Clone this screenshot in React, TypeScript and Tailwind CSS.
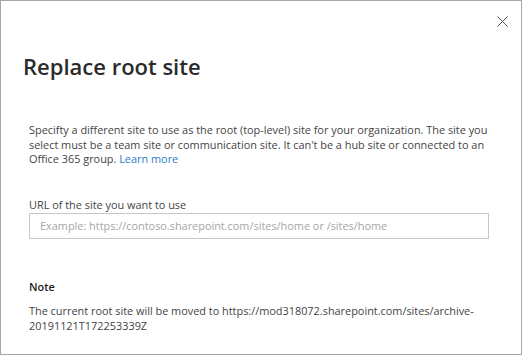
export default function App() {
  return (
    <div
      className="h-[355px] w-[522px] overflow-hidden border border-[#a6a6a6] bg-white text-[#444]"
      style={{ fontFamily: '"Open Sans", "Noto Sans", sans-serif' }}
    >
      {/* Header */}
      <div className="flex justify-end pr-[13px] pt-[14px]">
        <button className="flex h-[12px] w-[12px] items-center justify-center text-[#555]">
          <svg width="11" height="11" viewBox="0 0 11 11" fill="none">
            <path d="M0.5 0.5L10.5 10.5M10.5 0.5L0.5 10.5" stroke="currentColor" strokeWidth="1" />
          </svg>
        </button>
      </div>

      <h1 className="ml-[22px] mt-[25px] text-[22px] font-semibold leading-[28px] text-[#2b2b2b]">
        Replace root site
      </h1>

      <div className="px-[28px] pt-[43px]">
        <p className="w-[464px] text-[10.9px] leading-[14.5px]">
          Specifty a different site to use as the root (top-level) site for your organization. The
          site you select must be a team site or communication site. It can't be a hub site or
          connected to an Office 365 group.{" "}
          <a href="#" className="text-[#2b7bc4]">
            Learn more
          </a>
        </p>

        {/* URL field */}
        <label className="mt-[31px] block text-[10.9px] leading-[14px]">
          URL of the site you want to use
        </label>
        <input
          type="text"
          placeholder="Example: https://contoso.sharepoint.com/sites/home or /sites/home"
          className="mt-[1px] h-[26px] w-[460px] border border-[#c8c8c8] px-[10px] text-[10.9px] outline-none placeholder:text-[#a6a6a6]"
        />

        {/* Note */}
        <div className="mt-[40px]">
          <div className="text-[10.9px] font-semibold leading-[15px] text-[#222]">Note</div>
          <p className="mt-[9px] text-[10.9px] leading-[15px]">
            The current root site will be moved to
            https://mod318072.sharepoint.com/sites/archive-20191121T172253339Z
          </p>
        </div>
      </div>
    </div>
  );
}
